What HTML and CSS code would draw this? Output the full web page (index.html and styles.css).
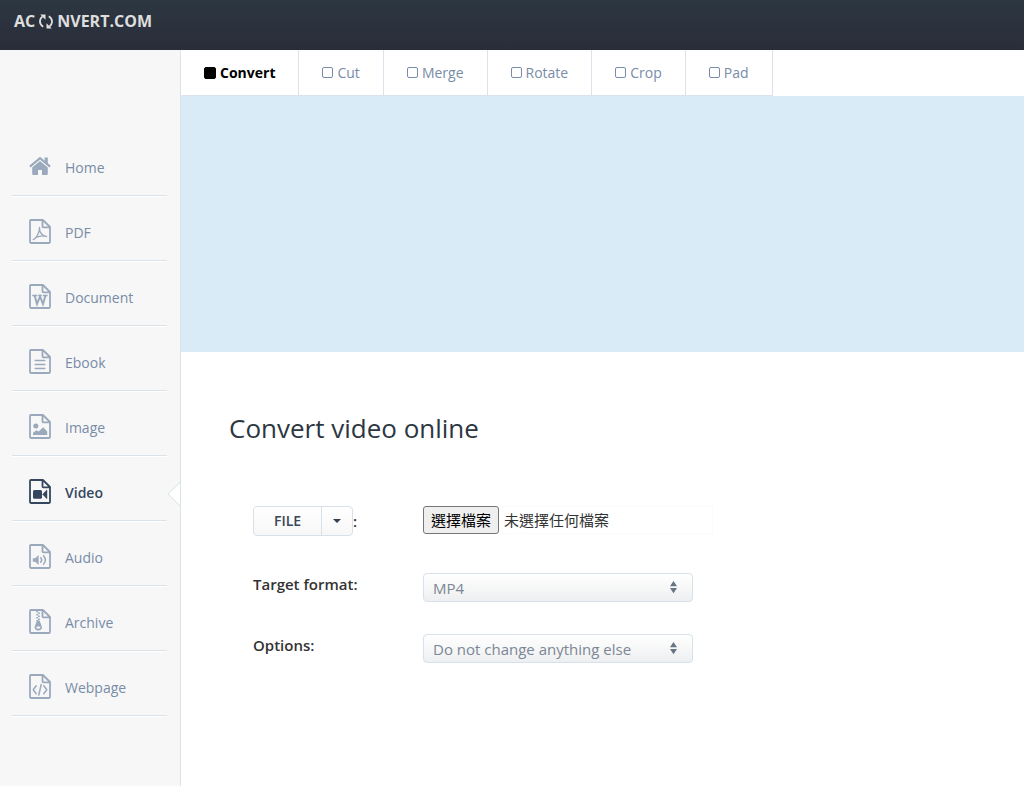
FILE: index.html
```html
<!DOCTYPE html>
<html lang="en">
<head>
<meta charset="utf-8">
<meta name="viewport" content="width=device-width, initial-scale=1">
<title>Convert video online</title>
<link rel="stylesheet" href="styles.css">
</head>
<body>
<svg class="defs" aria-hidden="true">
  <symbol id="page" viewBox="0 0 22 25">
    <path d="M1.900 1h12l7.100 7v15.100a.9.9 0 0 1-.9.9H1.900a.9.9 0 0 1-.9-.9V1.900A.9.9 0 0 1 1.900 1z M13.500 1v6.500a.9.9 0 0 0 .9.9H21" fill="none" stroke="currentColor" stroke-width="1.800" stroke-linejoin="round"/>
  </symbol>
</svg>
<header class="topbar">
  <a class="brand" href="#">AC<svg class="brand-icon" viewBox="0 0 14 15" aria-hidden="true"><path d="M4.200 12.700C1.800 11.200.8 9.200 1 6.900c.2-1.800 1-3.200 2.500-4.300M9.800 2.300c2.400 1.500 3.400 3.500 3.200 5.800-.2 1.800-1 3.200-2.500 4.300" fill="none" stroke="currentColor" stroke-width="1.800"/><path d="M1.200.5h5.300v5.300zM12.800 14.500H7.500V9.200z" fill="currentColor"/></svg>NVERT.COM</a>
</header>
<div class="layout">
  <nav class="sidebar" aria-label="Categories">
    <ul class="menu">
      <li class="menu-item"><a class="menu-link" href="#"><svg class="menu-icon" viewBox="0 0 22 25" aria-hidden="true"><path d="M.9 12.700 11 4.200l10.100 8.500" fill="none" stroke="currentColor" stroke-width="2.200"/><path d="M15.600 3.500h3.200v6.500l-3.200-2.800zM11 6.900l7.800 6.500v6.700c0 .5-.4.9-.9.9H13v-5H9v5H4.100a.9.9 0 0 1-.9-.9v-6.700z" fill="currentColor"/></svg>Home</a></li>
      <li class="menu-item"><a class="menu-link" href="#"><svg class="menu-icon" viewBox="0 0 22 25" aria-hidden="true"><use href="#page"/><path d="M4.300 20.700c2.500-1 6.500-6.800 6.200-12.200-.2 4.500 2.300 8.500 7 9-3.500-1.200-7.500-.6-11 1.200" fill="none" stroke="currentColor" stroke-width="1.300" stroke-linecap="round" stroke-linejoin="round"/></svg>PDF</a></li>
      <li class="menu-item"><a class="menu-link" href="#"><svg class="menu-icon" viewBox="0 0 22 25" aria-hidden="true"><use href="#page"/><path d="M3.300 11.500h5M9.200 11.500h3.600M13.800 11.500h4.900" fill="none" stroke="currentColor" stroke-width="1.500"/><path d="M5.600 11.500 8 20l3-7.500 3 7.500 2.500-8.500" fill="none" stroke="currentColor" stroke-width="2"/></svg>Document</a></li>
      <li class="menu-item"><a class="menu-link" href="#"><svg class="menu-icon" viewBox="0 0 22 25" aria-hidden="true"><use href="#page"/><path d="M6.200 11.500h9.600M6.200 15.500h9.600M6.200 19.500h9.600" fill="none" stroke="currentColor" stroke-width="1.500" stroke-linecap="round"/></svg>Ebook</a></li>
      <li class="menu-item"><a class="menu-link" href="#"><svg class="menu-icon" viewBox="0 0 22 25" aria-hidden="true"><use href="#page"/><circle cx="6.800" cy="12" r="2.500" fill="currentColor"/><path d="M4 21v-2.300l3.500-2.500 2.200 1.200 4.500-4.200 4 4.200V21z" fill="currentColor"/></svg>Image</a></li>
      <li class="menu-item"><a class="menu-link menu-link-active" href="#" aria-current="page"><svg class="menu-icon" viewBox="0 0 22 25" aria-hidden="true"><use href="#page"/><rect x="4" y="11" width="9" height="8.800" rx="1.500" fill="currentColor"/><path d="M13.500 15.200 17.500 11h.7v8.800h-.7l-4-4.200z" fill="currentColor"/></svg>Video</a></li>
      <li class="menu-item"><a class="menu-link" href="#"><svg class="menu-icon" viewBox="0 0 22 25" aria-hidden="true"><use href="#page"/><path d="M3.800 14.200h2.400l3.400-3.200v10l-3.400-3.200H3.800z" fill="currentColor"/><path d="M11.800 13.700q1.800 2.300 0 4.600M14.500 11.700q3.800 4.300 0 8.600" fill="none" stroke="currentColor" stroke-width="1.500" stroke-linecap="round"/></svg>Audio</a></li>
      <li class="menu-item"><a class="menu-link" href="#"><svg class="menu-icon" viewBox="0 0 22 25" aria-hidden="true"><use href="#page"/><path d="M8.200 2v10" fill="none" stroke="currentColor" stroke-width="1.800" stroke-dasharray="1.500 1.500"/><path d="M10 3.500v8.500" fill="none" stroke="currentColor" stroke-width="1.800" stroke-dasharray="1.500 1.500"/><path fill-rule="evenodd" d="M7.900 11.500h2.700l2.200 6.300c.7 2-1.100 3.700-3.500 3.700s-4.200-1.700-3.600-3.700zM7.200 18.600c0 1.600 4.200 1.600 4.200 0s-4.200-1.600-4.200 0z" fill="currentColor"/></svg>Archive</a></li>
      <li class="menu-item"><a class="menu-link" href="#"><svg class="menu-icon" viewBox="0 0 22 25" aria-hidden="true"><use href="#page"/><path d="M7.200 11.800 4.200 15.800l3 4M14.800 11.800l3 4-3 4M12.200 10.500 9.800 21" fill="none" stroke="currentColor" stroke-width="1.500" stroke-linecap="round" stroke-linejoin="round"/></svg>Webpage</a></li>
    </ul>
  </nav>
  <main class="main">
    <nav class="tabs" aria-label="Video tools">
      <a class="tab tab-active" href="#" aria-current="page"><span class="box"></span>Convert</a>
      <a class="tab" href="#"><span class="box"></span>Cut</a>
      <a class="tab" href="#"><span class="box"></span>Merge</a>
      <a class="tab" href="#"><span class="box"></span>Rotate</a>
      <a class="tab" href="#"><span class="box"></span>Crop</a>
      <a class="tab" href="#"><span class="box"></span>Pad</a>
    </nav>
    <div class="banner"></div>
    <section class="content">
      <h1 class="title">Convert video online</h1>
      <form class="form">
        <div class="source">
          <span class="group"><button class="btn" type="button">FILE</button><button class="btn btn-caret" type="button" aria-label="Choose source"><svg class="caret" viewBox="0 0 8 4" aria-hidden="true"><path d="M0 0h8L4 4z" fill="currentColor"/></svg></button></span><span class="label">:</span>
        </div>
        <label class="upload"><input class="upload-input" type="file"><span class="upload-button">選擇檔案</span><span class="upload-name">未選擇任何檔案</span></label>
        <label class="label" for="format">Target format:</label>
        <span class="picker"><select class="select" id="format"><option>MP4</option></select><svg class="arrows" viewBox="0 0 8 14" aria-hidden="true"><path d="M4 0l4 6H0zM4 14L0 8h8z" fill="currentColor"/></svg></span>
        <label class="label" for="options">Options:</label>
        <span class="picker"><select class="select" id="options"><option>Do not change anything else</option></select><svg class="arrows" viewBox="0 0 8 14" aria-hidden="true"><path d="M4 0l4 6H0zM4 14L0 8h8z" fill="currentColor"/></svg></span>
      </form>
    </section>
  </main>
</div>
</body>
</html>
```
FILE: styles.css
```css
* { box-sizing: border-box; }
body {
  margin: 0;
  min-height: 100vh;
  display: flex;
  flex-direction: column;
  background: #fff;
  color: #333;
  font: 14px/20px "Open Sans", "Noto Sans CJK TC", sans-serif;
}
a { color: inherit; text-decoration: none; }
.defs { position: absolute; width: 0; height: 0; }

.topbar {
  height: 50px;
  padding: 11px 14px;
  background: linear-gradient(#2c3742, #2a2d39);
}
.brand {
  display: inline-flex;
  align-items: center;
  color: #dedede;
  font-size: 16px;
  font-weight: 700;
}
.brand-icon { width: 14px; height: 15px; margin: 0 4px; }

.layout { flex: 1; display: flex; }
.sidebar {
  flex: 0 0 181px;
  padding: 81px 13px 0 12px;
  background: #f7f7f7;
  border-right: 1px solid #dae3e9;
}
.menu { margin: 0; padding: 0; list-style: none; }
.menu-item {
  position: relative;
  height: 65px;
  border-bottom: 1px solid #dbe2e9;
  box-shadow: 0 1px 0 #fff;
}
.menu-link {
  display: flex;
  align-items: center;
  gap: 14px;
  height: 64px;
  padding: 10px 0 0 17px;
  color: #788ca8;
}
.menu-icon { width: 22px; height: 25px; margin-bottom: 4px; color: #9ba9bc; }
.menu-link-active, .menu-link-active .menu-icon { color: #34475e; }
.menu-link-active { font-weight: 600; }
.menu-link-active::after {
  content: "";
  position: absolute;
  right: -22px;
  top: 29px;
  width: 17px;
  height: 17px;
  background: #fff;
  border: solid #dae3e9;
  border-width: 0 0 1px 1px;
  transform: rotate(45deg);
  clip-path: polygon(0 0, 100% 100%, 0 100%);
}

.main { flex: 1; min-width: 0; }
.tabs { display: flex; }
.tab {
  display: flex;
  align-items: center;
  gap: 4px;
  height: 46px;
  padding: 0 23px;
  border-right: 1px solid #dbe2ec;
  border-bottom: 1px solid #dbe2ec;
  color: #788ca8;
}
.tab-active { color: #000; font-weight: 700; }
.box {
  width: 11px;
  height: 11px;
  border: 1px solid currentColor;
  border-radius: 2px;
}
.tab-active .box { width: 12px; height: 12px; background: #000; }
.banner { height: 256px; background: #d9ebf7; }

.content { padding: 58px 48px; }
.title {
  margin: 0;
  color: #2c3742;
  font-size: 26px;
  line-height: 36px;
  font-weight: 400;
}
.form {
  display: grid;
  grid-template-columns: 170px minmax(0, 290px);
  row-gap: 32px;
  padding: 60px 24px 0;
}
.source { display: flex; align-items: center; height: 30px; }
.label {
  color: #333;
  font-size: 15px;
  line-height: 22px;
  font-weight: 600;
}
.group {
  display: flex;
  height: 30px;
  border: 1px solid #d6e1eb;
  border-radius: 4px;
  background: linear-gradient(#fff, #f7f7f7);
}
.btn {
  width: 67px;
  padding: 0;
  border: 0;
  background: none;
  color: #3b4656;
  font: inherit;
  font-weight: 600;
}
.btn-caret {
  width: 31px;
  border-left: 1px solid #d6e1eb;
  color: #333f4f;
}
.caret { display: block; width: 8px; height: 4px; margin: 0 auto; }
.upload {
  position: relative;
  display: flex;
  align-items: center;
  gap: 5px;
  height: 28px;
  margin-bottom: 7px;
  box-shadow: inset 0 0 0 1px #fbfbfb;
  color: #333;
  font-size: 15px;
}
.upload-input { position: absolute; width: 1px; height: 1px; opacity: 0; }
.upload-button {
  height: 28px;
  padding: 0 7px;
  border: 1px solid #767676;
  border-radius: 3px;
  background: #efefef;
  color: #000;
  line-height: 26px;
}
.picker {
  position: relative;
  width: 100%;
  max-width: 270px;
  height: 29px;
}
.select {
  appearance: none;
  width: 100%;
  height: 29px;
  padding: 0 32px 0 9px;
  border: 1px solid #d6e1eb;
  border-radius: 4px;
  background: linear-gradient(#fff, #eeeff0);
  color: #7b8795;
  font: inherit;
  font-size: 15px;
}
.arrows {
  position: absolute;
  top: 7px;
  right: 16px;
  width: 7px;
  height: 14px;
  color: #677484;
  pointer-events: none;
}
```
